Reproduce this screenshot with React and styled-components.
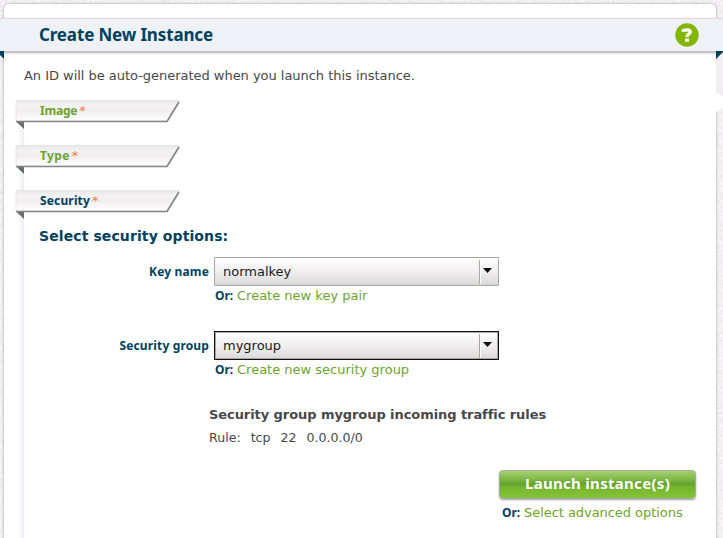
import React from "react";
import styled, { createGlobalStyle, css } from "styled-components";

const Global = createGlobalStyle`
  * { box-sizing: border-box; }
  html, body { margin: 0; height: 538px; overflow: hidden; }
  body { font: 13px/16px "DejaVu Sans", sans-serif; color: #484848; background: #e4dfe4; }
`;
const display = css`
  font-family: "Noto Sans", sans-serif;
  font-weight: 700;
  color: #00425d;
`;

const Page = styled.div`
  position: relative;
  width: 723px;
  height: 538px;
  padding-top: 4px;
  overflow: hidden;
`;
const Texture = styled.svg`
  position: absolute;
  inset: 0;
`;
const Panel = styled.main`
  position: relative;
  width: 712px;
  height: 534px;
  margin-left: 4px;
  padding-top: 14px;
  background: #fff;
  border-radius: 5px 5px 0 0;
  box-shadow: 0 0 2px 1px #c9c2c8;
`;
const Header = styled.header`
  display: flex;
  align-items: center;
  justify-content: space-between;
  width: 723px;
  height: 34px;
  margin-left: -4px;
  padding: 0 24px 0 39px;
  background: #eef1f6;
  border-top: 1px solid #e2d9df;
  border-bottom: 1px solid #c3c3c6;
  box-shadow: 0 1px 2px #aaa;
`;
const Title = styled.h1`
  ${display}
  margin: 0;
  font-size: 17px;
  letter-spacing: -0.15px;
  line-height: 32px;
  white-space: nowrap;
`;
const Fold = styled.svg`
  position: absolute;
  top: 47px;
  left: ${(p) => p.$left}px;
`;
const Intro = styled.p`
  margin: 16px 0 16px 20px;
  letter-spacing: -0.03px;
  white-space: nowrap;
`;
const Steps = styled.div`
  display: flex;
  flex-direction: column;
  height: 439px;
  margin-left: 11px;
  background: linear-gradient(90deg, transparent 4px, #f8fafc 4px, #f0f4f7 8px, #dfe3e6 8px, #f6f7f8 9px, transparent 9px) 0 21px no-repeat;
`;
const Step = styled.div`
  display: grid;
  width: 166px;
  height: 45px;
  flex: none;
  > * { grid-area: 1 / 1; }
`;
const StepLabel = styled.span`
  ${display}
  z-index: 1;
  padding-left: 25px;
  line-height: 21px;
  font-size: 12px;
  letter-spacing: ${(p) => p.$tracking}px;
  white-space: nowrap;
  color: ${(p) => (p.$current ? "#00425d" : "#6da32f")};
`;
const Star = styled.span`
  margin-left: 2px;
  font: 13px "DejaVu Sans", sans-serif;
  color: #f0813f;
`;
const Section = styled.h2`
  margin: -7px 0 13px 24px;
  font: bold 14px/16px "DejaVu Sans", sans-serif;
  letter-spacing: 0.1px;
  color: #00425d;
`;
const Field = styled.div`
  display: grid;
  grid-template-columns: 194px 285px;
  column-gap: 5px;
  height: 74px;
  grid-template-rows: 29px 20px;
`;
const Label = styled.label`
  ${display}
  font-size: 12px;
  letter-spacing: 0.15px;
  line-height: 29px;
  text-align: right;
  white-space: nowrap;
`;
const Select = styled.div`
  display: flex;
  align-items: stretch;
  justify-content: space-between;
  padding: 2px 1px 1px 8px;
  border: 1px solid ${(p) => (p.$focused ? "#111" : "#aaa6a4")};
  border-radius: ${(p) => (p.$focused ? 0 : 1)}px;
  box-shadow: ${(p) => (p.$focused ? "inset 0 0 0 1px #aaa6a4" : "inset 0 1px #fff")};
  background: linear-gradient(#fff, #f0eeee 50%, #dad9d9);
  line-height: 24px;
  color: #1a1a1a;
`;
const Arrow = styled.span`
  display: flex;
  justify-content: center;
  width: 18px;
  padding: 8px 2px 0 0;
  border-left: 1px solid #aaa6a4;
  box-shadow: inset 1px 0 #fff;
`;
const Alternative = styled.div`
  grid-column: 2;
  padding: 2px 0 0 1px;
  color: #6da32f;
  white-space: nowrap;
`;
const Or = styled.b`
  ${display}
  display: inline-block;
  width: 22px;
  font-size: 12px;
`;
const Rules = styled.section`
  margin: 2px 0 0 194px;
`;
const RulesTitle = styled.h3`
  margin: 0 0 7px;
  font: bold 13px/16px "DejaVu Sans", sans-serif;
  letter-spacing: -0.07px;
  white-space: nowrap;
`;
const Rule = styled.div`
  display: flex;
  gap: 10px;
  font-size: 12.6px;
`;
const Actions = styled.footer`
  display: flex;
  flex-direction: column;
  width: 197px;
  margin: 24px 0 0 484px;
`;
const Launch = styled.button`
  height: 29px;
  padding: 0;
  border: 1px solid #a5ac98;
  border-radius: 4px;
  background: linear-gradient(#a5cf73, #80ba48 30%, #65a02f 48%, #76b52e 60%, #85c339);
  box-shadow: 0 1px 2px #9c9da1;
  color: #fff;
  font: bold 15px/23px "Noto Sans", sans-serif;
  letter-spacing: 0.3px;
  padding-bottom: 3px;
`;
const Advanced = styled.div`
  padding: 6px 0 0 3px;
  letter-spacing: -0.05px;
  color: #6da32f;
  white-space: nowrap;
`;

const Ribbon = () => (
  <svg width="166" height="30" viewBox="0 0 166 30">
    <defs>
      <linearGradient id="ribbon" x2="0" y2="1">
        <stop offset="0" stopColor="#e8e8e8" />
        <stop offset=".25" stopColor="#f4f3f4" />
        <stop offset=".5" stopColor="#f0edef" />
        <stop offset="1" stopColor="#fff" />
      </linearGradient>
    </defs>
    <path d="M1 21.500H9V29Z" fill="#6c6c6c" />
    <path d="M1 2Q1 .5 2.500 .5H164L152.500 21H1Z" fill="url(#ribbon)" stroke="#dedede" strokeWidth=".7" />
    <path d="M1 21.500H152L164 2" fill="none" stroke="#858585" strokeWidth="1.700" />
  </svg>
);

const Choice = ({ label, value, link, focused }) => (
  <Field>
    <Label>{label}</Label>
    <Select $focused={focused}>
      {value}
      <Arrow>
        <svg width="9" height="6"><path d="M0 0H9L4.500 5Z" fill="#111" /></svg>
      </Arrow>
    </Select>
    <Alternative><Or>Or:</Or>{link}</Alternative>
  </Field>
);

const steps = [
  { name: "Image", tracking: -0.2 },
  { name: "Type", tracking: 0.35 },
  { name: "Security", tracking: 0.15, current: true },
];

export default function App() {
  return (
    <Page>
      <Global />
      <Texture width="723" height="538">
        <filter id="grain">
          <feTurbulence type="fractalNoise" baseFrequency=".4" numOctaves="3" seed="4" />
          <feColorMatrix values=".25 0 0 0 .775  .25 0 0 0 .745  .25 0 0 0 .765  0 0 0 0 1" />
        </filter>
        <rect width="723" height="538" filter="url(#grain)" />
      </Texture>
      <Panel>
        <Header>
          <Title>Create New Instance</Title>
          <svg width="24" height="24" viewBox="0 0 24 24">
            <circle cx="12" cy="12" r="11.700" fill="#82b600" />
            <path d="M8.200 8.700V7.800Q9.800 6.900 12 6.900Q15.200 6.900 15.200 9.100Q15.200 10.600 13.500 11.300Q12.100 11.900 12.100 14" fill="none" stroke="#fff" strokeWidth="3.400" />
            <path d="M10 15.500H14V18.700H10Z" fill="#fff" />
          </svg>
        </Header>
        <Fold $left={-4} width="4" height="8"><path d="M0 0H4V8L0 4Z" fill="#00425d" /></Fold>
        <Fold $left={712} width="7" height="70">
          <path d="M0 9L7 2V46L0 41Z" fill="#f1eef1" />
          <path d="M0 0H7V1L0 8Z" fill="#00425d" />
          <path d="M0 41L7 45V57L0 61Z" fill="#fff" />
        </Fold>
        <Intro>An ID will be auto-generated when you launch this instance.</Intro>
        <Steps>
          {steps.map(({ name, tracking, current }) => (
            <Step key={name}>
              <Ribbon />
              <StepLabel $current={current} $tracking={tracking}>{name}<Star>*</Star></StepLabel>
            </Step>
          ))}
          <Section>Select security options:</Section>
          <Choice label="Key name" value="normalkey" link="Create new key pair" />
          <Choice label="Security group" value="mygroup" link="Create new security group" focused />
          <Rules>
            <RulesTitle>Security group mygroup incoming traffic rules</RulesTitle>
            <Rule><span>Rule:</span><span>tcp</span><span>22</span><span>0.0.0.0/0</span></Rule>
          </Rules>
          <Actions>
            <Launch>Launch instance(s)</Launch>
            <Advanced><Or>Or:</Or>Select advanced options</Advanced>
          </Actions>
        </Steps>
      </Panel>
    </Page>
  );
}
